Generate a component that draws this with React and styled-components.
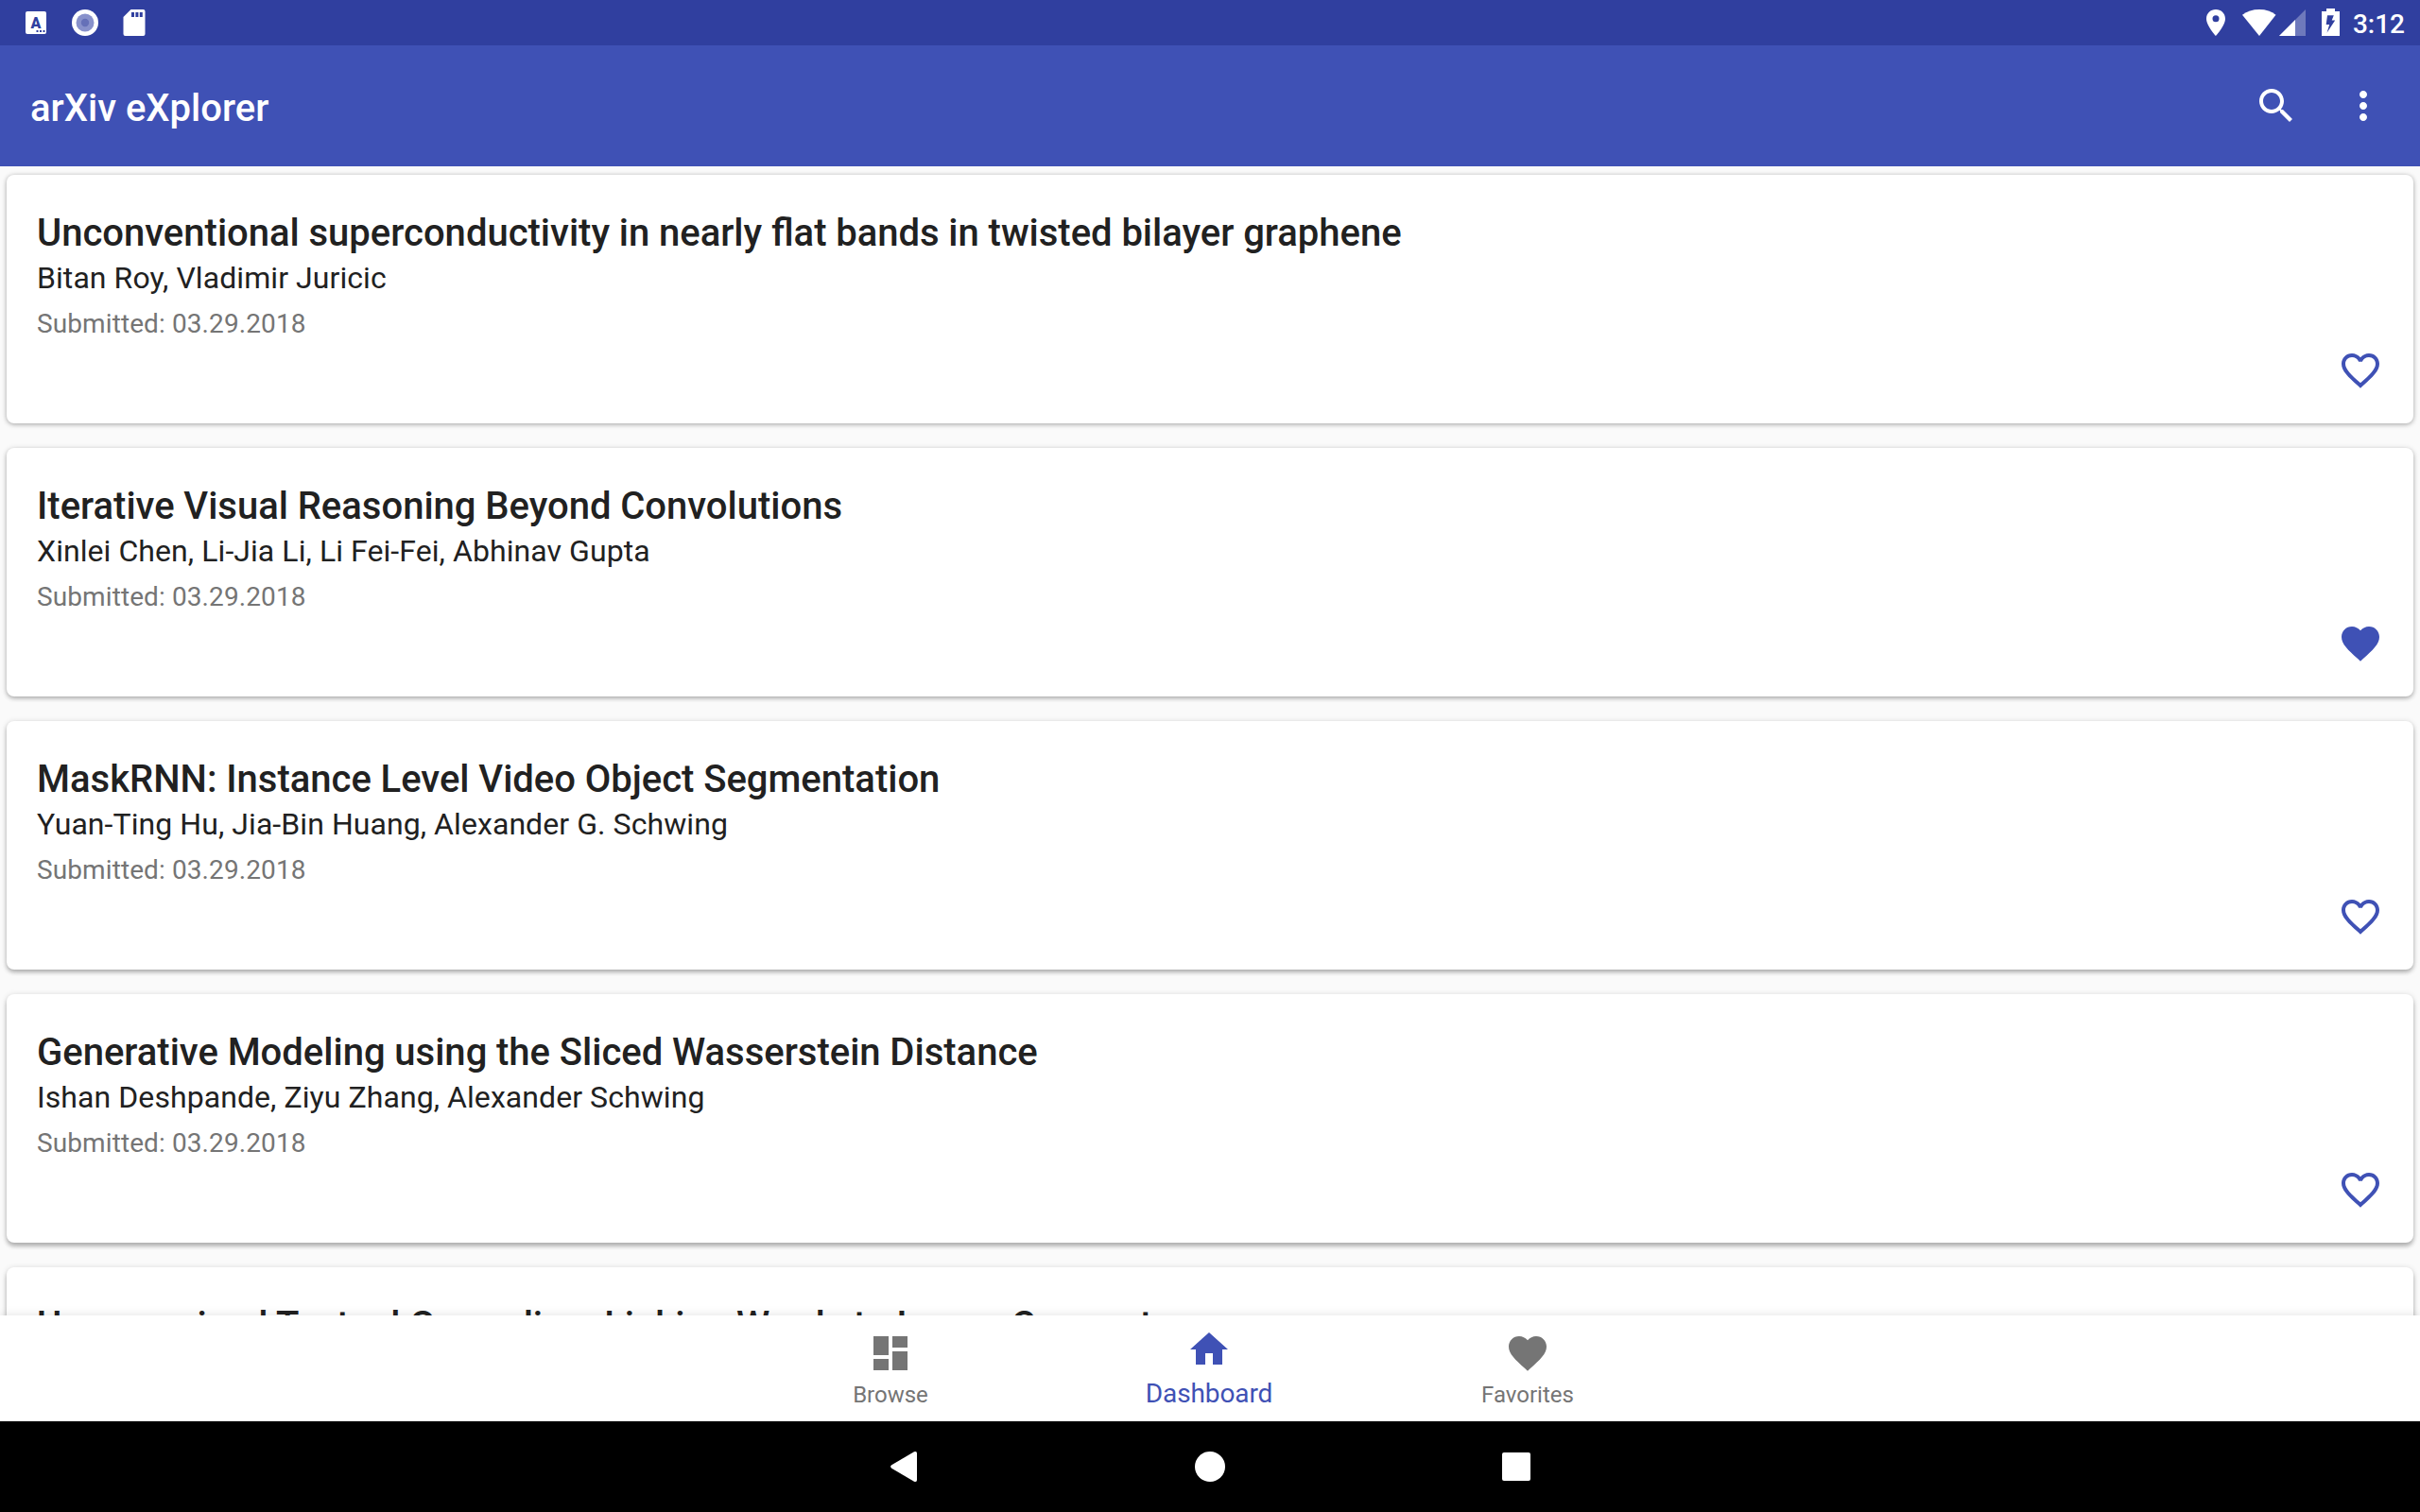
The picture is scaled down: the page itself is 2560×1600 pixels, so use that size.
import React from 'react';
import styled, { createGlobalStyle } from 'styled-components';

const Global = createGlobalStyle`
  *{box-sizing:border-box}
  html,body{margin:0;background:#fafafa;overflow:hidden}
  body{font-family:Roboto,"Noto Sans",sans-serif;color:#212121}
`;
const Screen = styled.div`
  width:2560px;height:1600px;display:flex;flex-direction:column;overflow:hidden;background:#fafafa;
`;
const StatusBar = styled.header`
  flex:0 0 48px;background:#303f9f;color:#fff;display:flex;justify-content:space-between;align-items:center;
  padding:0 16px 0 24px;
`;
const Notifications = styled.div`display:flex;align-items:center;height:48px;`;
const Glyph = styled.svg`
  display:block;flex:none;width:${p => p.$w}px;height:${p => p.$h || p.$w}px;
  margin-left:${p => p.$gap || 0}px;fill:${p => p.$color || 'currentColor'};
`;
const BadgeLetter = styled.text`font:900 16px Roboto,sans-serif;fill:#303f9f;text-anchor:middle;`;
const Clock = styled.span`font-size:28px;line-height:32px;font-weight:500;margin-left:14px;padding-top:4px;`;
const AppBar = styled.div`
  flex:0 0 128px;background:#3f51b5;color:#fff;display:flex;align-items:center;justify-content:space-between;
  padding:0 36px 0 32px;
`;
const AppTitle = styled.h1`margin:0;font-size:40px;line-height:48px;font-weight:500;padding-top:6px;`;
const Actions = styled.div`display:flex;gap:44px;`;
const Feed = styled.main`
  flex:1 1 0;min-height:0;overflow:hidden;display:flex;flex-direction:column;gap:26px;padding:9px 7px 0;
`;
const Card = styled.article`
  flex:0 0 263px;background:#fff;border-radius:8px;padding:38px 32px 0 32px;
  display:flex;justify-content:space-between;
  box-shadow:0 ${p => p.$lift}px 4px rgba(0,0,0,.22),0 1px 6px rgba(0,0,0,.16);
`;
const Title = styled.h2`margin:0;font-size:40px;line-height:48px;font-weight:500;word-spacing:-.2px;`;
const Authors = styled.p`margin:0;font-size:32px;line-height:46px;letter-spacing:.07px;`;
const Submitted = styled.p`margin:0;font-size:28px;line-height:52px;color:#757575;letter-spacing:.1px;`;
const Favorite = styled.button`
  border:0;background:none;padding:0;align-self:flex-start;margin-top:145px;color:#3f51b5;
`;
const BottomNav = styled.nav`
  flex:0 0 112px;background:#fff;display:flex;justify-content:center;padding-right:2px;position:relative;
  box-shadow:0 0 10px rgba(0,0,0,.12);
`;
const Tab = styled.div`
  width:337px;display:flex;flex-direction:column;align-items:center;
  padding-top:${p => (p.$active ? 12 : 16)}px;color:${p => (p.$active ? '#3f51b5' : '#757575')};
`;
const TabLabel = styled.span`
  font-size:${p => (p.$active ? 28 : 24)}px;line-height:32px;margin-top:${p => (p.$active ? 7 : 4)}px;
  letter-spacing:${p => (p.$active ? -0.1 : 0)}px;
`;
const SystemNav = styled.footer`
  flex:0 0 96px;background:#000;color:#fff;display:flex;justify-content:center;align-items:center;gap:276px;
`;

const HEART = 'M12 21.35l-1.45-1.32C5.4 15.36 2 12.28 2 8.5 2 5.42 4.42 3 7.5 3c1.74 0 3.41.81 4.5 2.09C13.09 3.81 14.76 3 16.5 3 19.58 3 22 5.42 22 8.5c0 3.78-3.4 6.86-8.55 11.54L12 21.35z';
const HEART_OUTLINE = 'M16.5 3c-1.74 0-3.41.81-4.5 2.09C10.91 3.81 9.24 3 7.5 3 4.42 3 2 5.42 2 8.5c0 3.78 3.4 6.86 8.55 11.54L12 21.35l1.45-1.32C18.6 15.36 22 12.28 22 8.5 22 5.42 19.58 3 16.5 3zm-4.4 15.55l-.1.1-.1-.1C7.14 14.24 4 11.39 4 8.5 4 6.5 5.5 5 7.5 5c1.54 0 3.04.99 3.57 2.36h1.87C13.46 5.99 14.96 5 16.5 5c2 0 3.5 1.5 3.5 3.5 0 2.89-3.14 5.74-7.9 10.05z';
const SEARCH = 'M15.5 14h-.79l-.28-.27C15.41 12.59 16 11.11 16 9.5 16 5.91 13.09 3 9.5 3S3 5.91 3 9.5 5.91 16 9.5 16c1.61 0 3.09-.59 4.23-1.57l.27.28v.79l5 4.99L20.49 19l-4.99-5zm-6 0C7.01 14 5 11.99 5 9.5S7.01 5 9.5 5 14 7.01 14 9.5 11.99 14 9.5 14z';
const MORE = 'M12 8c1.1 0 2-.9 2-2s-.9-2-2-2-2 .9-2 2 .9 2 2 2zm0 2c-1.1 0-2 .9-2 2s.9 2 2 2 2-.9 2-2-.9-2-2-2zm0 6c-1.1 0-2 .9-2 2s.9 2 2 2 2-.9 2-2-.9-2-2-2z';
const BROWSE = 'M3 13h8V3H3v10zm0 8h8v-6H3v6zm10 0h8V11h-8v10zm0-18v6h8V3h-8z';
const HOME = 'M10 20v-6h4v6h5v-8h3L12 3 2 12h3v8z';

const Icon = ({ path }) => <Glyph $w={48} viewBox="0 0 24 24"><path d={path} /></Glyph>;

const papers = [
  { title: 'Unconventional superconductivity in nearly flat bands in twisted bilayer graphene', authors: 'Bitan Roy, Vladimir Juricic', date: '03.29.2018', lift: 1 },
  { title: 'Iterative Visual Reasoning Beyond Convolutions', authors: 'Xinlei Chen, Li-Jia Li, Li Fei-Fei, Abhinav Gupta', date: '03.29.2018', liked: true, lift: 2 },
  { title: 'MaskRNN: Instance Level Video Object Segmentation', authors: 'Yuan-Ting Hu, Jia-Bin Huang, Alexander G. Schwing', date: '03.29.2018', lift: 3 },
  { title: 'Generative Modeling using the Sliced Wasserstein Distance', authors: 'Ishan Deshpande, Ziyu Zhang, Alexander Schwing', date: '03.29.2018', lift: 4 },
  { title: 'Unsupervised Textual Grounding: Linking Words to Image Concepts', lift: 4 },
];
const tabs = [
  { label: 'Browse', path: BROWSE },
  { label: 'Dashboard', path: HOME, active: true },
  { label: 'Favorites', path: HEART },
];

export default function App() {
  return (
    <Screen>
      <Global />
      <StatusBar>
        <Notifications>
          <Glyph $w={28} $h={48} viewBox="0 0 28 48">
            <path fillRule="evenodd" d="M5 12h18a2 2 0 0 1 2 2v20a2 2 0 0 1-2 2H5a2 2 0 0 1-2-2V14a2 2 0 0 1 2-2zM14.500 32v2h2v-2zM18 32v2h2v-2zM21.500 32v2h2v-2z" />
            <BadgeLetter x="14" y="29.500">A</BadgeLetter>
          </Glyph>
          <Glyph $w={30} $h={48} $gap={23} viewBox="0 0 30 48">
            <circle cx="15" cy="24" r="14" />
            <circle cx="15" cy="24" r="9.500" fill="#8891cb" />
            <circle cx="15" cy="24" r="4.200" fill="#6570b8" />
          </Glyph>
          <Glyph $w={24} $h={48} $gap={25} viewBox="0 0 24 48">
            <path fillRule="evenodd" d="M8.500 10H21.500a2 2 0 0 1 2 2V36a2 2 0 0 1-2 2H2.500a2 2 0 0 1-2-2V18zM9 13v5h3v-5zM13.400 13v5h3v-5zM17.800 13v5h3v-5z" />
          </Glyph>
        </Notifications>
        <Notifications>
          <Glyph $w={20} $h={48} viewBox="0 0 20 48">
            <path fillRule="evenodd" d="M10 10C4.500 10 0 14.200 0 19.700 0 27 10 38 10 38S20 27 20 19.700C20 14.200 15.500 10 10 10zM10 16.200a3.500 3.500 0 1 1 0 7 3.500 3.500 0 0 1 0-7z" />
          </Glyph>
          <Glyph $w={36} $h={48} $gap={18} viewBox="0 0 36 48">
            <path d="M0 15.800C5 12 11 10 18 10S31 12 35.500 15.800L18 38z" />
          </Glyph>
          <Glyph $w={28} $h={48} $gap={3} viewBox="0 0 28 48">
            <path d="M28 10V38H0z" opacity=".3" /><path d="M17 21V38H0z" />
          </Glyph>
          <Glyph $w={19} $h={48} $gap={17} viewBox="0 0 19 48">
            <path fillRule="evenodd" d="M5 9h9v3h5v26H0V12h5zM6 16.300 4.700 26H8.200L5.500 34.700 14.200 21.500H10.700L12.800 16.300z" />
          </Glyph>
          <Clock>3:12</Clock>
        </Notifications>
      </StatusBar>
      <AppBar>
        <AppTitle>arXiv eXplorer</AppTitle>
        <Actions><Icon path={SEARCH} /><Icon path={MORE} /></Actions>
      </AppBar>
      <Feed>
        {papers.map(p => (
          <Card key={p.title} $lift={p.lift}>
            <div>
              <Title>{p.title}</Title>
              {p.authors && <Authors>{p.authors}</Authors>}
              {p.date && <Submitted>Submitted: {p.date}</Submitted>}
            </div>
            <Favorite><Icon path={p.liked ? HEART : HEART_OUTLINE} /></Favorite>
          </Card>
        ))}
      </Feed>
      <BottomNav>
        {tabs.map(t => (
          <Tab key={t.label} $active={t.active}>
            <Icon path={t.path} />
            <TabLabel $active={t.active}>{t.label}</TabLabel>
          </Tab>
        ))}
      </BottomNav>
      <SystemNav>
        <Glyph $w={48} viewBox="0 0 48 48">
          <path d="M11.200 22.300 35 8.300Q38 7.300 38 10V38Q38 40.700 35 39.700L11.200 25.700Q9 24 11.200 22.300z" />
        </Glyph>
        <Glyph $w={48} viewBox="0 0 48 48"><circle cx="24" cy="24" r="16" /></Glyph>
        <Glyph $w={48} viewBox="0 0 48 48"><rect x="9" y="9" width="30" height="30" rx="2" /></Glyph>
      </SystemNav>
    </Screen>
  );
}
